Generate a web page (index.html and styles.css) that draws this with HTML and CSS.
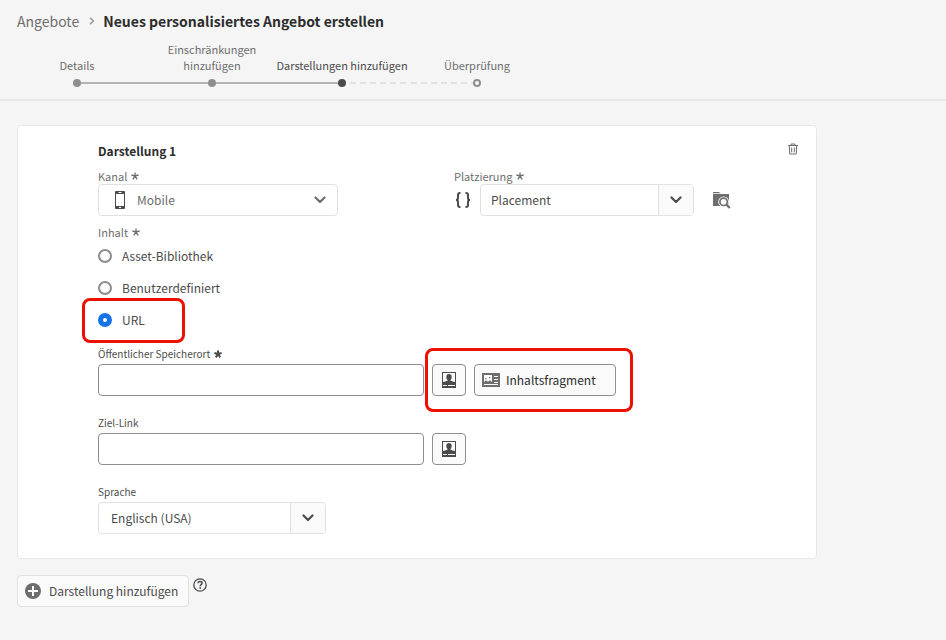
FILE: index.html
```html
<!DOCTYPE html>
<html lang="de">
<head>
<meta charset="utf-8">
<meta name="viewport" content="width=device-width, initial-scale=1">
<title>Neues personalisiertes Angebot erstellen</title>
<link rel="stylesheet" href="styles.css">
</head>
<body>
<svg class="defs" aria-hidden="true">
  <symbol id="chevron" viewBox="0 0 12 8"><path d="M1.500 1.500 6 6l4.500-4.500" fill="none" stroke="currentColor" stroke-width="2.200" stroke-linecap="round" stroke-linejoin="round"/></symbol>
  <symbol id="star" viewBox="0 0 8 8"><path d="M4 4V.4M4 4 .4 3M4 4l3.600-1M4 4 1.800 7.400M4 4l2.200 3.400" fill="none" stroke="currentColor"/></symbol>
  <symbol id="profile" viewBox="0 0 14 16"><path fill="currentColor" fill-rule="evenodd" d="M0 0h14v16H0zM1 1v9c1.200-.6 3.400-.7 4.500-1.300V7.900C4.600 7.200 4.300 6 4.300 4.800c0-1.900 1-2.800 2.700-2.800s2.700.9 2.700 2.800c0 1.200-.3 2.400-1.200 3.100v.8c1.100.6 3.300.7 4.500 1.300V1zM1 13v1h4v-1zM6 13v1h7v-1z"/></symbol>
</svg>

<header class="header">
  <nav class="breadcrumb" aria-label="Navigationspfad">
    <a href="#">Angebote</a>
    <svg class="crumb-arrow" viewBox="0 0 6 8" aria-hidden="true"><path d="m1 .8 3.500 3.200L1 7.200" fill="none" stroke="currentColor" stroke-width="1.300"/></svg>
    <h1>Neues personalisiertes Angebot erstellen</h1>
  </nav>
  <ol class="steps">
    <li class="step"><span class="step-label">Details</span><span class="track"><i class="line none"></i><i class="dot"></i><i class="line"></i></span></li>
    <li class="step inner"><span class="step-label">Einschränkungen<br>hinzufügen</span><span class="track"><i class="line"></i><i class="dot"></i><i class="line"></i></span></li>
    <li class="step inner current" aria-current="step"><span class="step-label">Darstellungen hinzufügen</span><span class="track"><i class="line"></i><i class="dot"></i><i class="line dashed"></i></span></li>
    <li class="step todo"><span class="step-label">Überprüfung</span><span class="track"><i class="line dashed"></i><i class="dot"></i><i class="line none"></i></span></li>
  </ol>
</header>

<main class="main">
  <form class="card">
    <div class="card-head">
      <h2>Darstellung 1</h2>
      <button class="plain trash" type="button" aria-label="Löschen">
        <svg viewBox="0 0 12 12" aria-hidden="true"><path d="M1 2.500h10M4 2.500V1h4v1.500M2.300 2.500l.5 8.500h6.400l.5-8.500M4.700 4.500v4.800M7.300 4.500v4.800" fill="none" stroke="currentColor"/></svg>
      </button>
    </div>

    <div class="row top-row">
      <div class="field channel">
        <label class="label muted" for="kanal">Kanal <svg class="star"><use href="#star"/></svg></label>
        <div class="picker quiet">
          <svg class="phone" viewBox="0 0 10 18" aria-hidden="true"><path fill="currentColor" fill-rule="evenodd" d="M1 0h8a1 1 0 0 1 1 1v16a1 1 0 0 1-1 1H1a1 1 0 0 1-1-1V1a1 1 0 0 1 1-1zM1 3v12h8V3zM3.500 1v1h3V1zM4 16v1h2v-1z"/></svg>
          <select id="kanal"><option>Mobile</option></select>
          <span class="arrow"><svg class="chevron"><use href="#chevron"/></svg></span>
        </div>
      </div>
      <div class="field">
        <label class="label muted" for="platz">Platzierung <svg class="star"><use href="#star"/></svg></label>
        <div class="row placement">
          <svg class="braces" viewBox="0 0 16 16" aria-hidden="true"><path d="M5.500 1H5C3.500 1 3 1.700 3 3v2.800C3 7.200 2.500 8 1 8c1.500 0 2 .8 2 2.200V13c0 1.300.5 2 2 2h.5M10.500 1h.5c1.500 0 2 .7 2 2v2.800c0 1.400.5 2.200 2 2.200-1.500 0-2 .8-2 2.200V13c0 1.300-.5 2-2 2h-.5" fill="none" stroke="currentColor" stroke-width="2"/></svg>
          <div class="picker split placement-picker">
            <select id="platz"><option>Placement</option></select>
            <span class="arrow"><svg class="chevron"><use href="#chevron"/></svg></span>
          </div>
          <button class="plain browse" type="button" aria-label="Platzierung suchen">
            <svg viewBox="0 0 18 17" aria-hidden="true"><path fill="currentColor" d="M0 0h6l1.300 1.200H0zM0 2h16v12H0z"/><circle cx="10.600" cy="9.800" r="5.400" fill="#fff"/><path d="m12.500 12 4.500 4.500" stroke="#fff" stroke-width="4"/><circle cx="10.600" cy="9.800" r="3.700" fill="none" stroke="currentColor" stroke-width="1.700"/><path d="m13.300 12.500 3.500 3.500" stroke="currentColor" stroke-width="2.200"/></svg>
          </button>
        </div>
      </div>
    </div>

    <fieldset class="choices">
      <legend class="label muted">Inhalt <svg class="star"><use href="#star"/></svg></legend>
      <label class="radio"><input type="radio" name="inhalt">Asset-Bibliothek</label>
      <label class="radio"><input type="radio" name="inhalt">Benutzerdefiniert</label>
      <label class="radio mark-url"><input type="radio" name="inhalt" checked>URL</label>
    </fieldset>

    <div class="field stacked first">
      <label class="label small" for="ort">Öffentlicher Speicherort <svg class="star strong"><use href="#star"/></svg></label>
      <div class="row controls">
        <input class="text" id="ort" type="text">
        <div class="row controls mark-tools">
          <button class="tool icon-only" type="button" aria-label="Personalisierung hinzufügen"><svg class="profile"><use href="#profile"/></svg></button>
          <button class="tool fragment" type="button">
            <svg class="fragment-icon" viewBox="0 0 18 14" aria-hidden="true"><path fill="currentColor" fill-rule="evenodd" d="M0 0h18v14H0zM2 2v7L4 7.300l2 1.500 1.800-1.500L10 9V2zM3.200 5h1.300v1.300H3.200zM7 4h1.300v1.300H7zM12 3v1h4V3zM12 6v1h4V6zM12 9v1h4V9zM2 11v1h14v-1z"/></svg>
            Inhaltsfragment
          </button>
        </div>
      </div>
    </div>

    <div class="field stacked">
      <label class="label small" for="ziel">Ziel-Link</label>
      <div class="row controls">
        <input class="text" id="ziel" type="text">
        <button class="tool icon-only" type="button" aria-label="Personalisierung hinzufügen"><svg class="profile"><use href="#profile"/></svg></button>
      </div>
    </div>

    <div class="field stacked">
      <label class="label small" for="sprache">Sprache</label>
      <div class="picker split language">
        <select id="sprache"><option>Englisch (USA)</option></select>
        <span class="arrow"><svg class="chevron"><use href="#chevron"/></svg></span>
      </div>
    </div>
  </form>

  <div class="row footer">
    <button class="add" type="button">
      <svg viewBox="0 0 16 16" aria-hidden="true"><circle cx="8" cy="8" r="8" fill="#6e6e6e"/><path d="M8 3v10M3 8h10" stroke="#fff" stroke-width="2"/></svg>
      Darstellung hinzufügen
    </button>
    <button class="plain help" type="button" aria-label="Hilfe">
      <svg viewBox="0 0 14 14" aria-hidden="true"><circle cx="7" cy="7" r="6.200" fill="none" stroke="currentColor" stroke-width="1.300"/><path d="M5 5.300C5.100 4.200 5.900 3.600 7 3.600c1.200 0 2 .6 2 1.600 0 1.300-1.800 1.500-1.800 3" fill="none" stroke="currentColor" stroke-width="1.500"/><circle cx="7.200" cy="10" r=".9" fill="currentColor"/></svg>
    </button>
  </div>
</main>
</body>
</html>
```
FILE: styles.css
```css
*, *::after { box-sizing: border-box; }

body {
  margin: 0;
  min-height: 100vh;
  background: #f5f5f5;
  color: #4b4b4b;
  font: 12px/20px "Noto Sans CJK SC", "Noto Sans", sans-serif;
}

svg { display: block; flex: none; }
button, input, select { font: inherit; color: inherit; margin: 0; }
h1, h2 { margin: 0; font-weight: bold; color: #2c2c2c; }

.defs { display: none; }
.row { display: flex; }

.header {
  padding-top: 11px;
  padding-bottom: 12px;
  border-bottom: 2px solid #eaeaea;
}

.breadcrumb {
  display: flex;
  align-items: center;
  padding: 0 17px;
  font-size: 14px;
}
.breadcrumb a { color: #6e6e6e; text-decoration: none; }
.breadcrumb h1 { font-size: 14px; }
.crumb-arrow { width: 6px; height: 8px; margin: 0 8px 0 10px; color: #8e8e8e; }

.steps {
  display: flex;
  align-items: flex-end;
  margin: 10px 0 0;
  padding: 0 7px;
  list-style: none;
}
.step {
  width: 140px;
  color: #6e6e6e;
  font-size: 11px;
  line-height: 16px;
  text-align: center;
}
.step.inner { width: 130px; }
.step.current { color: #4b4b4b; }
.step-label { display: flex; justify-content: center; white-space: nowrap; }
.step-label:has(br) { display: block; }
.track { display: flex; align-items: center; margin-top: 6px; }
.line { flex: 1; height: 2px; background: #b3b3b3; }
.line.none { background: none; }
.line.dashed { background: repeating-linear-gradient(90deg, #f5f5f5 0 4px, #e1e1e1 4px 10px); }
.dot { width: 8px; height: 8px; border-radius: 50%; background: #8e8e8e; }
.current .dot { background: #4b4b4b; }
.todo .dot { border: 2px solid #8e8e8e; background: #f5f5f5; }

.main { padding: 24px 17px; }

.card {
  max-width: 800px;
  padding: 15px 17px 24px 80px;
  border: 1px solid #e8e8e8;
  border-radius: 4px;
  background: #fff;
}
.card-head { display: flex; justify-content: space-between; }
.card-head h2 { font-size: 12px; line-height: 20px; }

.plain { padding: 0; border: 0; background: none; color: #6e6e6e; }
.trash { height: 16px; }
.trash svg { width: 12px; height: 12px; }

.label {
  display: flex;
  align-items: center;
  gap: 4px;
  padding: 0;
  font-size: 11px;
  line-height: 16px;
}
.label.muted { color: #6e6e6e; }
.label.small { margin-bottom: 2px; font-size: 10px; }
.star { width: 8px; height: 8px; stroke-width: 1.3px; }
.star.strong { stroke-width: 2px; }

.top-row { gap: 116px; margin-top: 7px; }
.channel { width: 240px; }

.picker {
  display: flex;
  height: 32px;
  border: 1px solid #e1e1e1;
  border-radius: 4px;
  background: #fff;
  overflow: hidden;
}
.picker select {
  flex: 1;
  min-width: 0;
  padding: 0 12px;
  border: 0;
  background: none;
  appearance: none;
}
.picker .arrow {
  display: flex;
  align-items: center;
  justify-content: center;
  width: 35px;
  pointer-events: none;
}
.split .arrow { border-left: 1px solid #e1e1e1; background: #fafafa; }
.quiet { align-items: center; color: #6e6e6e; }
.quiet .phone { width: 10px; height: 18px; margin-left: 16px; color: #4b4b4b; }
.chevron { width: 12px; height: 8px; }

.placement { align-items: center; }
.braces { width: 16px; height: 16px; margin-left: 1px; margin-right: 9px; }
.placement-picker { width: 214px; }
.placement-picker select { padding-left: 10px; }
.browse { margin-left: 19px; }
.browse svg { width: 18px; height: 17px; }

.choices { margin: 8px 0 0; padding: 0; border: 0; }
.radio {
  display: flex;
  align-items: center;
  gap: 10px;
  width: fit-content;
  height: 32px;
}
.radio input {
  width: 14px;
  height: 14px;
  border: 2px solid #8e8e8e;
  border-radius: 50%;
  background: #fafafa;
  appearance: none;
}
.radio input:checked { border: 5px solid #1473e6; background: #fff; }

.mark-url, .mark-tools { position: relative; }
.mark-url::after, .mark-tools::after {
  content: "";
  position: absolute;
  border: 3px solid #eb1000;
  border-radius: 8px;
  pointer-events: none;
}
.mark-url::after { top: -6px; bottom: -7px; left: -16px; width: 103px; }
.mark-tools::after { inset: -16px -17px -16px -7px; }

.stacked { margin-top: 19px; }
.stacked.first { margin-top: 10px; }
.controls { gap: 8px; }

.text {
  width: 326px;
  height: 32px;
  padding: 0 12px;
  border: 1px solid #8e8e8e;
  border-radius: 4px;
  background: #fff;
}
.tool {
  display: flex;
  align-items: center;
  height: 32px;
  border: 1px solid #8e8e8e;
  border-radius: 4px;
  background: #fafafa;
}
.icon-only { justify-content: center; width: 34px; padding: 0; }
.profile { width: 14px; height: 16px; }
.fragment { gap: 6px; width: 142px; padding: 0 7px; color: #2c2c2c; }
.fragment-icon { width: 18px; height: 14px; color: #6e6e6e; }
.language { width: 228px; }

.footer { align-items: flex-start; gap: 4px; margin-top: 16px; }
.add {
  display: flex;
  align-items: center;
  gap: 8px;
  min-width: 172px;
  height: 32px;
  padding: 0 7px;
  border: 1px solid #e1e1e1;
  border-radius: 4px;
  background: #fafafa;
}
.add svg { width: 16px; height: 16px; }
.help { margin-top: 3px; color: #4b4b4b; }
.help svg { width: 14px; height: 14px; }
```
